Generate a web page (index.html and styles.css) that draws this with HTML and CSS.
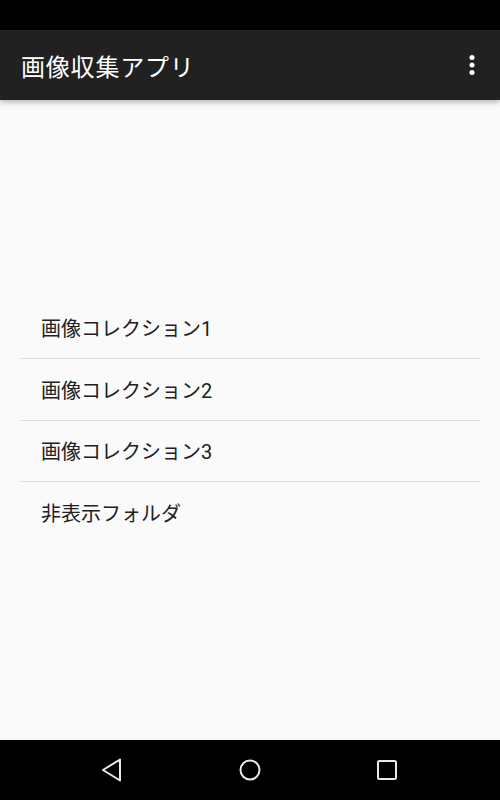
FILE: index.html
```html
<!DOCTYPE html>
<html lang="ja">
<head>
  <meta charset="UTF-8">
  <title>画像収集アプリ</title>
  <link rel="stylesheet" href="styles.css">
</head>
<body>
  <div class="screen">
    <div class="status-bar"></div>

    <header class="toolbar">
      <h1 class="toolbar-title">画像収集アプリ</h1>
      <button class="overflow" aria-label="その他のオプション">
        <svg width="30" height="30" viewBox="0 0 24 24">
          <circle cx="12" cy="6" r="2" fill="#fff"/>
          <circle cx="12" cy="12" r="2" fill="#fff"/>
          <circle cx="12" cy="18" r="2" fill="#fff"/>
        </svg>
      </button>
    </header>

    <main class="content">
      <ul class="menu-list">
        <li class="menu-item">画像コレクション1</li>
        <li class="menu-item">画像コレクション2</li>
        <li class="menu-item">画像コレクション3</li>
        <li class="menu-item">非表示フォルダ</li>
      </ul>
    </main>

    <nav class="nav-bar">
      <svg class="nav-icon" width="24" height="28" viewBox="0 0 24 28">
        <path d="M3 14 L20 3.5 L20 24.5 Z" fill="none" stroke="#e8e8e8" stroke-width="2" stroke-linejoin="round"/>
      </svg>
      <svg class="nav-icon" width="24" height="24" viewBox="0 0 24 24">
        <circle cx="12" cy="12" r="9.5" fill="none" stroke="#e8e8e8" stroke-width="2"/>
      </svg>
      <svg class="nav-icon" width="24" height="24" viewBox="0 0 24 24">
        <rect x="3" y="3" width="18" height="18" rx="1.5" fill="none" stroke="#e8e8e8" stroke-width="2"/>
      </svg>
    </nav>
  </div>
</body>
</html>
```

FILE: styles.css
```css
* {
  box-sizing: border-box;
}

body {
  margin: 0;
  font-family: Roboto, "Noto Sans CJK JP", sans-serif;
  background-color: #fafafa;
}

.screen {
  display: flex;
  flex-direction: column;
  height: 800px;
}

.status-bar {
  height: 30px;
  background-color: #000;
}

.toolbar {
  height: 70px;
  background-color: #212121;
  display: flex;
  align-items: center;
  justify-content: space-between;
  padding: 0 13px 0 21px;
  box-shadow: 0 2px 6px rgba(0,0,0,0.3);
  position: relative;
  z-index: 1;
}

.toolbar-title {
  margin: 0;
  color: #fff;
  font-size: 24px;
  font-weight: normal;
  letter-spacing: 0.8px;
}

.overflow {
  background: none;
  border: none;
  padding: 0;
  width: 30px;
  height: 30px;
  display: flex;
}

.content {
  flex: 1;
  display: flex;
  flex-direction: column;
  justify-content: center;
  padding: 0 20px;
}

.menu-list {
  list-style: none;
  margin: 0;
  padding: 0;
}

.menu-item {
  height: 60.5px;
  display: flex;
  align-items: center;
  padding-left: 21px;
  font-size: 20px;
  color: #212121;
}

.menu-item + .menu-item {
  height: 61.5px;
  border-top: 1px solid #e0e0e0;
}

.nav-bar {
  height: 60px;
  background-color: #000;
  display: flex;
  align-items: center;
  justify-content: space-between;
  padding: 0 101px 0 100px;
}
```
